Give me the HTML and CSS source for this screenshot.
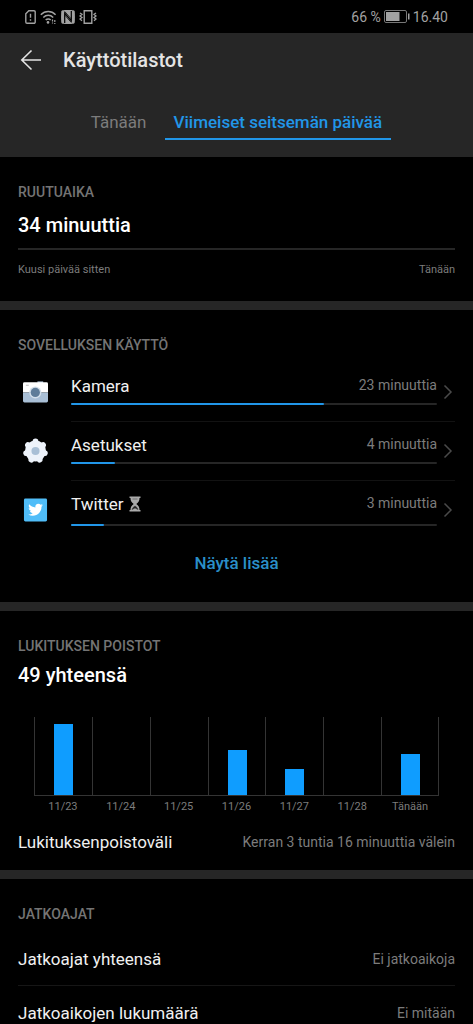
FILE: index.html
```html
<!DOCTYPE html>
<html lang="fi">
<head>
<meta charset="utf-8">
<meta name="viewport" content="width=device-width, initial-scale=1">
<title>Käyttötilastot</title>
<link rel="stylesheet" href="styles.css">
</head>
<body>
<div class="status">
  <div class="status-icons">
    <svg width="11" height="14" viewBox="0 0 11 14" fill="none" stroke="currentColor" stroke-width="1.400"><path d="M3.800.7H9a1.200 1.200 0 0 1 1.200 1.200v10.200A1.200 1.200 0 0 1 9 13.300H2A1.200 1.200 0 0 1 .8 12.100V3.700z"/><path d="M5.500 3.800v4M5.500 9.200v1.600"/></svg>
    <svg width="17" height="14" viewBox="0 0 17 14" fill="none" stroke="currentColor" stroke-width="1.500"><path d="M.8 4.800c4.300-4.300 10.600-4.300 14.800 0M3.300 7.500c2.900-2.900 7-2.900 9.900 0M5.700 10c1.500-1.500 3.600-1.500 5 0"/><circle cx="8" cy="12.400" r="1.300" fill="currentColor" stroke="none"/><path d="M12.500 9.500v4M14.800 10v4" stroke-width="1.200" stroke-dasharray="2 1"/></svg>
    <svg width="14" height="14" viewBox="0 0 14 14"><path fill="currentColor" d="M1.500.3C4 0 10 0 12.500.3q1 .2 1.200 1.200c.3 3 .3 8 0 11q-.2 1-1.200 1.200c-2.500.3-8.500.3-11 0q-1-.2-1.200-1.200c-.3-3-.3-8 0-11Q.5.500 1.500.3z"/><path d="M3.700 13V3.200l6.600 7.600V1" fill="none" stroke="#000" stroke-width="1.200"/><path d="M3.700 1.500 10.300 9M3.700 5l6.600 7.500" fill="none" stroke="#000" stroke-width=".8"/></svg>
    <svg width="18" height="14" viewBox="0 0 18 14" fill="none" stroke="currentColor" stroke-width="1.400"><path d="M5.200.7h7.600v12.600H5.200z"/><path d="M1 3l2 1.300L1 6l2 1.500L1 9l2 1.800M17 3l-2 1.300L17 6l-2 1.500L17 9l-2 1.800" stroke-width="1.300"/></svg>
  </div>
  <div class="status-right">
    <span>66 %</span>
    <svg width="26" height="13" viewBox="0 0 26 13"><rect x=".5" y=".5" width="22" height="12" rx="1.500" fill="none" stroke="#777"/><rect x="2" y="2" width="13.500" height="9" fill="currentColor"/><path d="M24 3.500h1.500v6H24z" fill="currentColor"/></svg>
    <span>16.40</span>
  </div>
</div>

<header class="header">
  <div class="titlebar">
    <button class="back" aria-label="Takaisin">
      <svg width="22" height="22" viewBox="0 0 22 22" fill="none" stroke="currentColor" stroke-width="1.600"><path d="M21 11H1.500M11.500 1.500 1.800 11l9.700 9.500"/></svg>
    </button>
    <h1 class="title">Käyttötilastot</h1>
  </div>
  <nav class="tabs">
    <button class="tab">Tänään</button>
    <button class="tab tab-active">Viimeiset seitsemän päivää</button>
  </nav>
</header>

<main>
  <section class="section">
    <h2 class="label">RUUTUAIKA</h2>
    <p class="value value-spaced">34 minuuttia</p>
    <div class="timeline"></div>
    <div class="range"><span>Kuusi päivää sitten</span><span>Tänään</span></div>
  </section>

  <section class="section">
    <h2 class="label">SOVELLUKSEN KÄYTTÖ</h2>
    <ul class="apps">
      <li class="app">
        <svg class="app-icon" viewBox="0 0 26 26"><path fill="#a9bfd6" d="M15 2.500h6V5h-6z"/><path fill="#fff" d="M1.500 3.500h23A1.500 1.500 0 0 1 26 5v9H0V5a1.500 1.500 0 0 1 1.500-1.500z"/><path fill="#a9bfd6" d="M0 14h26v9a1.500 1.500 0 0 1-1.500 1.500h-23A1.500 1.500 0 0 1 0 23z"/><path stroke="#999" stroke-width=".7" d="M3 6.500h3"/><circle cx="12.800" cy="14" r="6.300" fill="#d3dfeb"/><circle cx="12.800" cy="14" r="4.800" fill="#5e7c99"/></svg>
        <div class="app-body">
          <div class="app-main">
            <div class="app-line"><span class="app-name">Kamera</span><span class="app-time">23 minuuttia</span></div>
            <div class="track"><div class="fill" style="width:69%"></div></div>
          </div>
          <svg class="chevron" viewBox="0 0 10 16"><path d="M1.500 1.500 8 8l-6.500 6.500"/></svg>
        </div>
      </li>
      <li class="app">
        <svg class="app-icon" viewBox="0 0 26 26"><g fill="#edf2fa"><circle cx="13" cy="13.500" r="10.900"/><g stroke="#edf2fa" stroke-width="6" stroke-linecap="round"><path d="M13 13.500V3.500"/><path d="M13 13.500V3.500" transform="rotate(51.430 13 13.500)"/><path d="M13 13.500V3.500" transform="rotate(102.860 13 13.500)"/><path d="M13 13.500V3.500" transform="rotate(154.290 13 13.500)"/><path d="M13 13.500V3.500" transform="rotate(205.710 13 13.500)"/><path d="M13 13.500V3.500" transform="rotate(257.140 13 13.500)"/><path d="M13 13.500V3.500" transform="rotate(308.570 13 13.500)"/></g></g><circle cx="13" cy="13.500" r="4.200" fill="#a9bfd6"/></svg>
        <div class="app-body">
          <div class="app-main">
            <div class="app-line"><span class="app-name">Asetukset</span><span class="app-time">4 minuuttia</span></div>
            <div class="track"><div class="fill" style="width:12%"></div></div>
          </div>
          <svg class="chevron" viewBox="0 0 10 16"><path d="M1.500 1.500 8 8l-6.500 6.500"/></svg>
        </div>
      </li>
      <li class="app app-limited">
        <svg class="app-icon" viewBox="0 0 26 26"><rect x="1" y="1.500" width="24" height="24" rx="1.500" fill="#50bdf8"/><g transform="translate(5.400 5.600) scale(.64)"><path fill="#fff" d="M23.950 4.570a10 10 0 0 1-2.820.77 4.960 4.960 0 0 0 2.160-2.720c-.95.550-2 .95-3.130 1.180a4.920 4.920 0 0 0-8.380 4.480C7.690 8.090 4.070 6.130 1.640 3.160a4.820 4.820 0 0 0-.67 2.480c0 1.710.87 3.210 2.190 4.100a4.900 4.900 0 0 1-2.230-.62v.06a4.920 4.920 0 0 0 3.950 4.830 5 5 0 0 1-2.210.08 4.940 4.940 0 0 0 4.600 3.420A9.870 9.870 0 0 1 0 19.540a13.990 13.990 0 0 0 7.550 2.210c9.050 0 14-7.500 14-13.980 0-.21 0-.42-.02-.63a9.940 9.940 0 0 0 2.420-2.570z"/></g></svg>
        <div class="app-body">
          <div class="app-main">
            <div class="app-line"><span class="app-name">Twitter <svg width="12" height="16" viewBox="0 0 12 16"><path fill="#aaa" d="M.5.500h11V2h-1c0 3-1 4.300-3.200 6 2.200 1.700 3.200 3 3.200 6h1v1.500H.5V14h1c0-3 1-4.300 3.200-6C2.500 6.300 1.500 5 1.500 2h-1z"/><path d="M3 13.500c.5-1.700 1.500-2.500 3-3.500 1.500 1 2.500 1.800 3 3.500L6 12zM3.500 3h5" fill="#222" stroke="#333" stroke-width=".5"/></svg></span><span class="app-time">3 minuuttia</span></div>
            <div class="track"><div class="fill" style="width:9%"></div></div>
          </div>
          <svg class="chevron" viewBox="0 0 10 16"><path d="M1.500 1.500 8 8l-6.500 6.500"/></svg>
        </div>
      </li>
    </ul>
    <button class="more">Näytä lisää</button>
  </section>

  <section class="section">
    <h2 class="label">LUKITUKSEN POISTOT</h2>
    <p class="value">49 yhteensä</p>
    <div class="chart">
      <div class="col"><div class="plot"><div class="bar" style="height:71px"></div></div><span class="day">11/23</span></div>
      <div class="col"><div class="plot"></div><span class="day">11/24</span></div>
      <div class="col"><div class="plot"></div><span class="day">11/25</span></div>
      <div class="col"><div class="plot"><div class="bar" style="height:45px"></div></div><span class="day">11/26</span></div>
      <div class="col"><div class="plot"><div class="bar" style="height:26px"></div></div><span class="day">11/27</span></div>
      <div class="col"><div class="plot"></div><span class="day">11/28</span></div>
      <div class="col"><div class="plot"><div class="bar" style="height:41px"></div></div><span class="day">Tänään</span></div>
    </div>
    <div class="pair pair-chart"><span class="pair-name">Lukituksenpoistoväli</span><span class="pair-value">Kerran 3 tuntia 16 minuuttia välein</span></div>
  </section>

  <section class="section">
    <h2 class="label">JATKOAJAT</h2>
    <div class="extras">
      <div class="pair pair-row"><span class="pair-name">Jatkoajat yhteensä</span><span class="pair-value">Ei jatkoaikoja</span></div>
      <div class="pair pair-row"><span class="pair-name">Jatkoaikojen lukumäärä</span><span class="pair-value">Ei mitään</span></div>
    </div>
  </section>
</main>
</body>
</html>
```
FILE: styles.css
```css
* { box-sizing: border-box; }

body {
  margin: 0;
  background: #000;
  color: #fff;
  font-family: Roboto, "Noto Sans", sans-serif;
  font-size: 16px;
}

h1, h2, p, ul { margin: 0; padding: 0; }

button {
  margin: 0;
  padding: 0;
  border: 0;
  background: none;
  color: inherit;
  font: inherit;
  cursor: pointer;
}

svg { display: block; flex: none; }

.status {
  display: flex;
  justify-content: space-between;
  align-items: center;
  height: 33px;
  padding: 0 25px;
  color: #a2a2a2;
  font-size: 14px;
}
.status-icons { display: flex; gap: 4px; }
.status-right { display: flex; align-items: center; gap: 3px; }

.header {
  padding: 10px 18px 17px;
  background: #262626;
}
.titlebar {
  display: flex;
  align-items: center;
  gap: 21px;
  height: 34px;
  padding-left: 2px;
}
.back { color: #e4e4e4; }
.title {
  color: #e4e4e4;
  font-size: 20px;
  font-weight: 500;
  line-height: 34px;
}
.tabs {
  display: flex;
  justify-content: center;
  gap: 9px;
  margin-top: 28px;
}
.tab {
  padding: 1px 9px 0;
  border-bottom: 2px solid transparent;
  color: #7c7c7c;
  font-size: 17px;
  line-height: 32px;
}
.tab-active {
  border-color: #2196e8;
  color: #2196e8;
  font-weight: 500;
}

.section { padding: 25px 18px 24px; }
.section + .section { border-top: 9px solid #262626; }

.label {
  color: #747474;
  font-size: 14px;
  font-weight: 500;
  line-height: 20px;
}
.value {
  margin-top: 5px;
  font-size: 20px;
  font-weight: 500;
  line-height: 28px;
}
.value-spaced { margin-top: 9px; }

.timeline {
  height: 2px;
  margin-top: 9px;
  background: #262626;
}
.range {
  display: flex;
  justify-content: space-between;
  margin: 12px 0 -1px;
  color: #7c7c7c;
  font-size: 11px;
  line-height: 16px;
}

.apps { margin-top: 8px; list-style: none; }
.app {
  display: flex;
  gap: 23px;
  padding-left: 5px;
}
.app-icon { width: 25px; height: 25px; margin-top: 16px; }
.app-body {
  display: flex;
  flex: 1;
  gap: 6px;
  padding: 11px 0 16px;
  border-bottom: 1px solid #121212;
}
.app:last-child .app-body { border-bottom: 0; }
.app-main { flex: 1; }
.app-line {
  display: flex;
  justify-content: space-between;
  height: 24px;
  line-height: 24px;
}
.app-name { display: flex; gap: 6px; align-items: center; color: #f0f0f0; font-size: 17px; }
.app-time { color: #7c7c7c; font-size: 14px; line-height: 22px; }
.track {
  height: 2px;
  margin-top: 5px;
  border-radius: 1px;
  background: #262626;
}
.app-limited .track { margin-top: 8px; }
.fill { height: 2px; border-radius: 1px; background: #2196e8; }
.chevron {
  width: 10px;
  height: 16px;
  margin: 10px 2px 0 0;
  fill: none;
  stroke: #4a4a4a;
  stroke-width: 1.5;
}
.more {
  display: block;
  margin: 9px auto 3px;
  color: #2a8fc8;
  font-size: 17px;
  font-weight: 500;
  line-height: 24px;
}

.chart {
  display: flex;
  margin: 28px 16px 0;
}
.col { flex: 1; text-align: center; }
.plot {
  display: flex;
  justify-content: center;
  align-items: flex-end;
  height: 79px;
  border-bottom: 1px solid #343434;
  border-left: 1px solid #343434;
}
.col:last-child .plot { border-right: 1px solid #343434; }
.bar { width: 19px; background: #0f9dff; }
.day {
  display: block;
  margin-top: 3px;
  color: #7c7c7c;
  font-size: 11px;
  line-height: 16px;
}

.pair {
  display: flex;
  justify-content: space-between;
  align-items: center;
  line-height: 22px;
}
.pair-name { color: #f0f0f0; font-size: 17px; }
.pair-value { color: #7c7c7c; font-size: 14px; }
.pair-chart { margin: 16px 0 -7px; }
.extras { margin-top: 8px; }
.pair-row { padding: 16px 0 15px; border-bottom: 1px solid #161616; }
.pair-row:last-child { padding-bottom: 0; border-bottom: 0; }
.section:last-child { padding-bottom: 0; }
```
